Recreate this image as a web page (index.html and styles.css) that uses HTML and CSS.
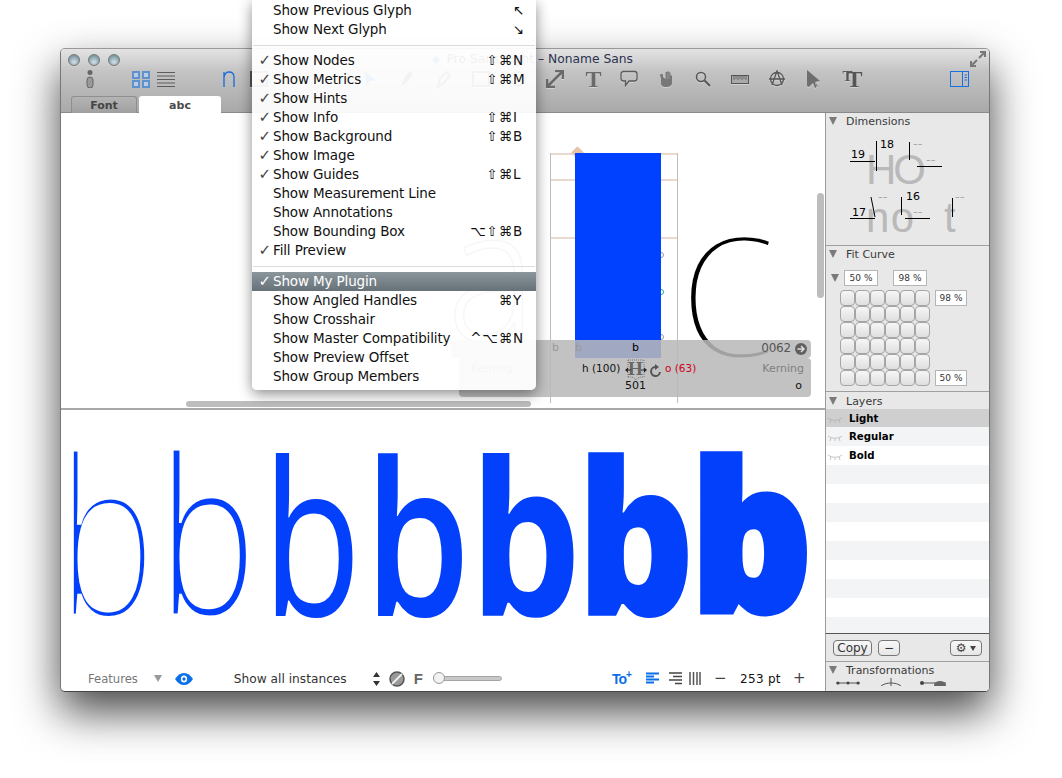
FILE: index.html

```html
<!DOCTYPE html>
<html lang="en">
<head>
    <meta charset="UTF-8">
    <title>Noname Sans</title>
    <link rel="stylesheet" href="styles.css">
</head>
<body>
<div class="window">
    <div class="titlebar">
        <div class="title-row">
            <div class="lights"><i></i><i></i><i></i></div>
            <div class="title"><span class="doc-dot"></span> Pro Sans Light – Noname Sans</div>
            <svg class="fullscreen" width="16" height="16" viewBox="0 0 16 16"><path d="M1 15 L7 9 M9 7 L15 1 M10 1 H15 V6 M1 10 V15 H6" fill="none" stroke="#777" stroke-width="2"/></svg>
        </div>
        <div class="tool-row">
            <svg class="info" width="8" height="18" viewBox="0 0 8 18"><circle cx="4" cy="2.5" r="2.5" fill="#666"/><rect x="1" y="7" width="6" height="11" rx="3" fill="#999" stroke="#666"/></svg>
            <svg class="view-grid" width="18" height="17" viewBox="0 0 18 17"><g fill="#b9cde6" stroke="#5f92cc" stroke-width="2"><rect x="1" y="1" width="6" height="6"/><rect x="11" y="1" width="6" height="6"/><rect x="1" y="10" width="6" height="6"/><rect x="11" y="10" width="6" height="6"/></g></svg>
            <svg class="view-list" width="18" height="17" viewBox="0 0 18 17"><path d="M0 1.5H18M0 5H18M0 8.500H18M0 12H18M0 15.500H18" stroke="#5c5c5c"/></svg>
            <svg class="tool-n" width="12" height="16" viewBox="0 0 12 16"><path d="M1 16V1M1 6C2 2 4 1 6 1C9 1 11 3 11 6V16" fill="none" stroke="#1f6fd8" stroke-width="1.400"/></svg>
            <div class="tools">
                <div class="tool"><svg width="18" height="16" viewBox="0 0 18 16"><rect x="1" y="1" width="16" height="14" fill="none" stroke="#555" stroke-width="2"/></svg></div>
                <div class="tool"></div>
                <div class="tool"></div>
                <div class="tool"><svg width="16" height="18" viewBox="0 0 16 18"><path d="M2 1L14 11H8L5 17Z" fill="#1f6fd8"/></svg></div>
                <div class="tool"><svg width="16" height="18" viewBox="0 0 16 18"><path d="M2 17L5 8L11 1L14 4L9 11Z" fill="#555"/></svg></div>
                <div class="tool"><svg width="16" height="18" viewBox="0 0 16 18"><path d="M2 17L4 9L10 2L14 6L8 13Z" fill="none" stroke="#555" stroke-width="2"/></svg></div>
                <div class="tool"><svg width="18" height="16" viewBox="0 0 18 16"><rect x="1" y="1" width="16" height="14" fill="none" stroke="#555" stroke-width="2"/></svg></div>
                <div class="tool"><svg width="18" height="18" viewBox="0 0 18 18"><circle cx="9" cy="9" r="7" fill="none" stroke="#555" stroke-width="2"/></svg></div>
                <div class="tool"><svg width="18" height="18" viewBox="0 0 18 18"><path d="M2 16L16 2M1 9V17H9M9 1H17V9" fill="none" stroke="#6a6a6a" stroke-width="2.600"/></svg></div>
                <div class="tool"><span class="tool-t">T</span></div>
                <div class="tool"><svg width="18" height="18" viewBox="0 0 18 18"><path d="M3.500 1.500H14.500C16 1.500 17 2.500 17 4V8.500C17 10 16 11 14.500 11H9L5.500 15.500V11H3.500C2 11 1 10 1 8.500V4C1 2.500 2 1.500 3.500 1.500Z" fill="none" stroke="#5a5a5a" stroke-width="1.300"/></svg></div>
                <div class="tool"><svg width="16" height="18" viewBox="0 0 16 18"><path d="M2 5L3 9V13C3 16 5 17 8 17C11 17 14 16 14 13V6C14 5 12.500 5 12.500 6V3C12.500 2 11 2 11 3V2C11 1 9.300 1 9.300 2V2.500C9.300 1.500 7.500 1.500 7.500 2.500V9L5 7V5C5 3.500 2 3.500 2 5Z" fill="#777"/><path d="M7.500 3V9M9.300 3V9M11 3V9" stroke="#a5a5a5" stroke-width="0.600"/></svg></div>
                <div class="tool"><svg width="16" height="16" viewBox="0 0 16 16"><circle cx="6" cy="6" r="4.500" fill="none" stroke="#555" stroke-width="1.500"/><path d="M9.500 9.500L15 15" stroke="#555" stroke-width="2"/></svg></div>
                <div class="tool"><svg width="18" height="9" viewBox="0 0 18 9"><rect x="0.500" y="0.500" width="17" height="8" fill="#aaa" stroke="#555"/><path d="M3 1V5M5 1V4M7 1V5M9 1V4M11 1V5M13 1V4M15 1V5" stroke="#555" stroke-width="0.700"/></svg></div>
                <div class="tool"><svg width="18" height="18" viewBox="0 0 18 18"><circle cx="9" cy="9" r="6.500" fill="none" stroke="#555" stroke-width="1.300"/><path d="M4 15L9 1L14 15M1 9H17" fill="none" stroke="#555" stroke-width="1.300"/></svg></div>
                <div class="tool"><svg width="15" height="19" viewBox="0 0 15 19"><path d="M1 0L14 11L9 12L12 16L9 18L7 13L3 17L1 16Z" fill="#6e6e6e"/><path d="M9 14H10M11 14H12M10 16H11" stroke="#ddd" stroke-width="0.800"/></svg></div>
                <div class="tool"><span class="tool-tt">T</span><span class="tool-tt big">T</span></div>
            </div>
            <svg class="panel-toggle" width="19" height="16" viewBox="0 0 19 16"><rect x="0.500" y="0.500" width="18" height="15" fill="none" stroke="#1a6fe0"/><path d="M12.500 1V15" stroke="#1a6fe0"/><path d="M14.500 4H17M14.500 6.500H17M14.500 9H17" stroke="#1a6fe0"/></svg>
        </div>
        <div class="tabs">
            <div class="tab">Font</div>
            <div class="tab active">abc</div>
        </div>
    </div>

    <div class="main">
        <div class="editor">
            <div class="canvas">
                <span class="ghost-a">a</span>
                <div class="metric-box">
                    <span class="metric-line l1"></span>
                    <span class="metric-line l2"></span>
                    <span class="metric-line l3"></span>
                </div>
                <span class="anchor"></span>
                <span class="node n1"></span>
                <span class="node n2"></span>
                <span class="node n3"></span>
                <span class="plugin-rect"></span>
                <span class="next-c">c</span>
                <div class="info-top">
                    <span class="info-prev">b</span>
                    <span class="info-prev second">b</span>
                    <span class="info-name">b</span>
                    <span class="info-code">0062</span>
                    <svg class="info-go" width="12" height="12" viewBox="0 0 12 12"><circle cx="6" cy="6" r="6" fill="#606060"/><path d="M2.500 6H8M6 3L9 6L6 9" fill="none" stroke="#ddd" stroke-width="1.500"/></svg>
                </div>
                <div class="info-bottom">
                    <span class="left-k">h (100)</span>
                    <span class="h-mark">H</span>
                    <svg class="h-arrows" width="22" height="22" viewBox="0 0 22 22"><path d="M1 11H6M16 11H21" stroke="#222"/><path d="M0 11L3 8.500V13.500ZM22 11L19 8.500V13.500Z" fill="#222"/><path d="M3 1H19M3 1V18M19 1V18M3 18C7 18 9 18 11 21C13 18 15 18 19 18" fill="none" stroke="#444" stroke-width="0.600" stroke-dasharray="1 1"/></svg>
                    <span class="width-val">501</span>
                    <svg class="reload" width="14" height="14" viewBox="0 0 14 14"><path d="M11 8A4.500 4.500 0 1 1 7 3" fill="none" stroke="#555" stroke-width="2"/><path d="M6 0L10 3L6 6Z" fill="#555"/></svg>
                    <span class="right-k">o (63)</span>
                    <span class="kern-label">Kerning</span>
                    <span class="kern-val">o</span>
                    <span class="kern-hidden">Kerning</span>
                </div>
                <span class="scroll-v"></span>
                <span class="scroll-h"></span>
            </div>
            <div class="preview">
                <div class="samples">
                    <span class="b b1">b</span>
                    <span class="b b2">b</span>
                    <span class="b b3">b</span>
                    <span class="b b4">b</span>
                    <span class="b b5">b</span>
                    <span class="b b6">b</span>
                    <span class="b b7">b</span>
                </div>
                <div class="status">
                    <span class="features">Features</span>
                    <span class="tri tri-features"></span>
                    <svg class="eye" width="18" height="12" viewBox="0 0 20 12" preserveAspectRatio="none"><path d="M0 6C3 2 6 0 10 0C14 0 17 2 20 6C17 10 14 12 10 12C6 12 3 10 0 6Z" fill="#0a6fe8"/><circle cx="10" cy="6" r="3.500" fill="#fff"/><circle cx="10" cy="6" r="1.800" fill="#0a6fe8"/></svg>
                    <span class="instances">Show all instances</span>
                    <svg class="stepper" width="7" height="14" viewBox="0 0 7 14"><path d="M3.500 0L7 5H0ZM3.500 14L0 9H7Z" fill="#333"/></svg>
                    <svg class="no-icon" width="16" height="16" viewBox="0 0 16 16"><circle cx="8" cy="8" r="7" fill="#999" stroke="#555" stroke-width="1.500"/><path d="M3 13L13 3" stroke="#eee" stroke-width="2"/></svg>
                    <span class="f-mark">F</span>
                    <div class="slider"><span class="knob"></span></div>
                    <span class="to-plus">To<sup>+</sup></span>
                    <svg class="align a-left" width="13" height="13" viewBox="0 0 13 13"><path d="M0 1.500H13M0 4.500H8M0 7.500H13M0 10.500H8" stroke="#0a6fe8" stroke-width="2"/></svg>
                    <svg class="align a-right" width="13" height="13" viewBox="0 0 13 13"><path d="M0 1H13M4 4.500H13M0 8H13M6 11.500H13" stroke="#444" stroke-width="1.500"/></svg>
                    <svg class="align a-just" width="12" height="13" viewBox="0 0 12 13"><path d="M1 0V13M4.500 0V13M8 0V13M11 0V13" stroke="#555" stroke-width="1.500"/></svg>
                    <span class="zoom-btn minus">−</span>
                    <span class="size">253 pt</span>
                    <span class="zoom-btn plus">+</span>
                </div>
            </div>
        </div>

        <div class="sidebar">
            <section class="panel dims">
                <h4><span class="tri"></span>Dimensions</h4>
                <svg class="dim-art" width="164" height="112" viewBox="826 132 164 112">
                    <text x="866" y="184" class="dim-big" textLength="60">HO</text>
                    <text x="866" y="232" class="dim-big" textLength="48">no</text>
                    <text x="944" y="232" class="dim-big">t</text>
                    <path d="M850 161.500H875M876.500 141V171M909.500 142V160M917 166.500H942M850 218.500H875M871 197L875 217M901.500 197V215M905 218.500H930M952.500 198V217" stroke="#000" fill="none"/>
                    <text x="851" y="158" class="dim-num">19</text>
                    <text x="880" y="148" class="dim-num">18</text>
                    <text x="852" y="216" class="dim-num">17</text>
                    <text x="906" y="200" class="dim-num">16</text>
                    <text x="913" y="148" class="dim-dash">--</text>
                    <text x="926" y="164" class="dim-dash">--</text>
                    <text x="878" y="201" class="dim-dash">--</text>
                    <text x="913" y="216" class="dim-dash">--</text>
                    <text x="955" y="201" class="dim-dash">--</text>
                </svg>
            </section>
            <section class="panel fit">
                <h4><span class="tri"></span>Fit Curve</h4>
                <div class="fit-top">
                    <span class="tri"></span>
                    <span class="pct">50 %</span>
                    <span class="pct">98 %</span>
                </div>
                <div class="fit-body">
                    <div class="fit-grid">
                        <i></i><i></i><i></i><i></i><i></i><i></i>
                        <i></i><i></i><i></i><i></i><i></i><i></i>
                        <i></i><i></i><i></i><i></i><i></i><i></i>
                        <i></i><i></i><i></i><i></i><i></i><i></i>
                        <i></i><i></i><i></i><i></i><i></i><i></i>
                        <i></i><i></i><i></i><i></i><i></i><i></i>
                    </div>
                    <div class="fit-side">
                        <span class="pct">98 %</span>
                        <span class="pct">50 %</span>
                    </div>
                </div>
            </section>
            <section class="panel layers">
                <h4><span class="tri"></span>Layers</h4>
                <ul class="layer-list">
                    <li class="selected"><svg width="14" height="6" viewBox="0 0 14 6"><path d="M0 1C4 4 10 4 14 1M3 3L2 6M7 4V6M11 3L12 6" fill="none" stroke="#aaa" stroke-width="0.700"/></svg>Light</li>
                    <li><svg width="14" height="6" viewBox="0 0 14 6"><path d="M0 1C4 4 10 4 14 1M3 3L2 6M7 4V6M11 3L12 6" fill="none" stroke="#aaa" stroke-width="0.700"/></svg>Regular</li>
                    <li><svg width="14" height="6" viewBox="0 0 14 6"><path d="M0 1C4 4 10 4 14 1M3 3L2 6M7 4V6M11 3L12 6" fill="none" stroke="#aaa" stroke-width="0.700"/></svg>Bold</li>
                    <li></li><li></li><li></li><li></li><li></li><li></li><li></li><li></li><li></li>
                </ul>
                <div class="layer-actions">
                    <button class="btn btn-copy">Copy</button>
                    <button class="btn btn-minus">−</button>
                    <button class="btn btn-gear">⚙ <span class="tri-small"></span></button>
                </div>
            </section>
            <section class="panel trans">
                <h4><span class="tri"></span>Transformations</h4>
                <svg class="trans-icons" width="130" height="8" viewBox="0 0 130 8"><path d="M10 5H34M65 0V8M55 8C60 4 70 4 75 8M95 5H120" stroke="#555" fill="none"/><circle cx="12" cy="5" r="1.500" fill="#444"/><circle cx="22" cy="5" r="1.500" fill="#444"/><circle cx="32" cy="5" r="1.500" fill="#444"/><circle cx="96" cy="5" r="2" fill="#444"/><ellipse cx="114" cy="7" rx="6" ry="4" fill="#666"/></svg>
            </section>
        </div>
    </div>
</div>

<div class="menu">
    <div class="item"><span></span><span>Show Previous Glyph</span><span></span><span class="key">↖</span></div>
    <div class="item"><span></span><span>Show Next Glyph</span><span></span><span class="key">↘</span></div>
    <hr>
    <div class="item"><span class="check">✓</span><span>Show Nodes</span><span class="mods">⇧⌘</span><span class="key">N</span></div>
    <div class="item"><span class="check">✓</span><span>Show Metrics</span><span class="mods">⇧⌘</span><span class="key">M</span></div>
    <div class="item"><span class="check">✓</span><span>Show Hints</span><span></span><span class="key"></span></div>
    <div class="item"><span class="check">✓</span><span>Show Info</span><span class="mods">⇧⌘</span><span class="key">I</span></div>
    <div class="item"><span class="check">✓</span><span>Show Background</span><span class="mods">⇧⌘</span><span class="key">B</span></div>
    <div class="item"><span class="check">✓</span><span>Show Image</span><span></span><span class="key"></span></div>
    <div class="item"><span class="check">✓</span><span>Show Guides</span><span class="mods">⇧⌘</span><span class="key">L</span></div>
    <div class="item"><span></span><span>Show Measurement Line</span><span></span><span class="key"></span></div>
    <div class="item"><span></span><span>Show Annotations</span><span></span><span class="key"></span></div>
    <div class="item"><span></span><span>Show Bounding Box</span><span class="mods">⌥⇧⌘</span><span class="key">B</span></div>
    <div class="item"><span class="check">✓</span><span>Fill Preview</span><span></span><span class="key"></span></div>
    <hr>
    <div class="item on"><span class="check">✓</span><span>Show My Plugin</span><span></span><span class="key"></span></div>
    <div class="item"><span></span><span>Show Angled Handles</span><span class="mods">⌘</span><span class="key">Y</span></div>
    <div class="item"><span></span><span>Show Crosshair</span><span></span><span class="key"></span></div>
    <div class="item"><span></span><span>Show Master Compatibility</span><span class="mods">^⌥⌘</span><span class="key">N</span></div>
    <div class="item"><span></span><span>Show Preview Offset</span><span></span><span class="key"></span></div>
    <div class="item"><span></span><span>Show Group Members</span><span></span><span class="key"></span></div>
</div>
</body>
</html>
```

FILE: styles.css

```css
* { box-sizing: border-box; }
html, body { margin: 0; height: 778px; overflow: hidden; background: #fff; }
body { font-family: "DejaVu Sans", sans-serif; color: #000; position: relative; }

.window { margin: 48px 0 0 60px; width: 930px; height: 644px; border: 1px solid #777; border-top-color: #999; border-bottom-color: #444; border-radius: 5px; background: #fff; box-shadow: 0 20px 44px rgba(0,0,0,.72); overflow: hidden; display: flex; flex-direction: column; }

/* title bar */
.titlebar { height: 64px; flex: none; background: linear-gradient(#e4e4e4, #c4c4c4 22px, #a9a9a9 63px, #8a8a8a 63px); display: flex; flex-direction: column; }
.title-row { height: 20px; display: flex; align-items: center; padding: 0 1px 0 7px; }
.lights { display: flex; gap: 8px; margin-top: 1px; }
.lights i { width: 12px; height: 12px; border-radius: 50%; border: 1px solid #777; background: radial-gradient(circle at 50% 70%, #d4e2e8, #7f9aa6 70%); }
.title { margin-left: 272px; width: 241px; font-size: 12.300px; color: #2c3350; text-align: right; white-space: nowrap; }
.doc-dot { display: inline-block; width: 6px; height: 6px; background: #3a78b8; transform: rotate(45deg); margin-right: 4px; }
.fullscreen { margin-left: auto; margin-right: 2px; }

.tool-row { height: 20px; display: flex; align-items: center; padding-left: 25px; }
.view-grid { margin-left: 38px; }
.view-list { margin-left: 7px; }
.tool-n { margin-left: 48px; margin-top: -1px; }
.tools { display: flex; margin-left: 5px; }
.tool { width: 37px; height: 20px; display: flex; align-items: center; justify-content: center; filter: drop-shadow(0 1px 0 rgba(255,255,255,.35)); }
.tool-t, .tool-tt { font-family: "Liberation Serif", serif; font-weight: bold; color: #6a6a6a; font-size: 24px; line-height: 1; }
.tool-t { padding-left: 4px; }
.tool-tt { font-size: 15px; color: #555; margin-left: 4px; margin-top: -6px; }
.tool-tt.big { font-size: 24px; margin: 0 0 0 -6px; }
.panel-toggle { margin-left: 81px; }

.tabs { display: flex; gap: 2px; padding-left: 10px; margin-top: auto; height: 17px; }
.tab { width: 66px; background: linear-gradient(#b4b4b4, #a0a0a0); border: 1px solid #8f8f8f; border-bottom: 0; border-radius: 3px 3px 0 0; font-size: 11px; font-weight: bold; color: #444; text-align: center; line-height: 16px; padding-top: 1px; }
.tab.active { width: 82px; background: #fff; border-color: #fff; color: #4a4a4a; }

.main { flex: 1; display: flex; min-height: 0; }
.editor { width: 764px; flex: none; display: flex; flex-direction: column; }

/* edit canvas: everything in here has a free position */
.canvas { height: 297px; flex: none; position: relative; overflow: hidden; border-bottom: 2px solid #a8a8a8; }
.ghost-a { position: absolute; left: 386px; top: 63px; font: 300 185px/1 "Open Sans", sans-serif; color: transparent; -webkit-text-stroke: 1.500px #888; transform: scaleX(.91); transform-origin: 0 0; }
.metric-box { position: absolute; left: 489px; top: 40px; width: 128px; height: 250px; border: 1px solid #bdbdbd; border-bottom: 0; }
.metric-line { position: absolute; left: 0; right: 0; height: 2px; background: #e9d9cf; }
.l1 { top: -1px; }
.l2 { top: 25px; }
.l3 { top: 83px; }
.anchor { position: absolute; left: 512px; top: 35px; width: 9px; height: 9px; background: #e6c4a8; transform: rotate(45deg); }
.plugin-rect { position: absolute; left: 514px; top: 40px; width: 86px; height: 205px; background: #0040ff; }
.node { position: absolute; width: 6px; height: 6px; border: 1px solid #999; border-radius: 50%; background: #fff; left: 597px; }
.n1 { top: 139px; }
.n2 { top: 176px; border-color: #2a9; left: 597px; }
.n3 { top: 221px; }
.next-c { position: absolute; left: 614px; top: 42px; font: 300 230px/1 "Open Sans", sans-serif; color: #000; -webkit-text-stroke: 7px #fff; transform: scaleX(.96); transform-origin: 0 0; }

.info-top, .info-bottom { position: absolute; right: 14px; background: rgba(185,185,185,.87); font-size: 11px; border-radius: 4px; }
.info-top { top: 227px; left: 390px; height: 18px; }
.info-bottom { top: 245px; left: 398px; height: 39px; }
.info-top span, .info-top svg, .info-bottom span, .info-bottom svg { position: absolute; white-space: nowrap; }
.info-prev { left: 101px; top: 1px; color: #999; }
.info-prev.second { left: 124px; }
.info-name { left: 181px; top: 1px; }
.info-code { right: 20px; top: 1px; color: #555; font-size: 12px; letter-spacing: -.2px; }
.info-go { right: 4px; top: 3px; }
.left-k { left: 123px; top: 4px; color: #111; font-size: 10.500px; }
.h-mark { left: 169px; top: 0; font: bold 19px/22px "Liberation Serif", serif; color: #666; }
.h-arrows { left: 166px; top: 1px; }
.width-val { left: 166px; top: 21px; color: #111; }
.reload { left: 190px; top: 6px; }
.right-k { left: 206px; top: 4px; color: #d0021b; font-size: 10.500px; }
.kern-label { right: 7px; top: 4px; color: #808080; }
.kern-val { right: 9px; top: 21px; color: #111; }
.kern-hidden { left: 12px; top: 4px; color: #777; }

.scroll-v { position: absolute; left: 756px; top: 80px; width: 7px; height: 105px; border-radius: 4px; background: #bdbdbd; }
.scroll-h { position: absolute; left: 125px; top: 288px; width: 345px; height: 6px; border-radius: 3px; background: #bdbdbd; }

/* sample line */
.preview { flex: 1; display: flex; flex-direction: column; min-height: 0; }
.samples { height: 256px; display: flex; overflow: hidden; }
.b { font-family: "Open Sans", sans-serif; font-size: 214px; line-height: 1; color: #0340fb; display: block; flex: none; transform-origin: 0 0; margin-top: 16px; }
.b1 { font-weight: 300; font-size: 222px; width: 101px; margin-left: -4px; margin-top: 10px; transform: scaleX(.75); -webkit-text-stroke: 6px #fff; }
.b2 { font-weight: 300; font-size: 218px; width: 104px; margin-top: 12px; transform: scaleX(.76); -webkit-text-stroke: 3px #fff; }
.b3 { font-weight: 400; width: 102px; transform: scaleX(.76); }
.b4 { font-weight: 600; width: 105px; transform: scaleX(.8); }
.b5 { font-weight: 700; width: 107px; transform: scaleX(.83); }
.b6 { font-weight: 800; width: 115px; transform: scaleX(.87); }
.b7 { font-weight: 800; font-size: 205px; width: 120px; margin-top: 19px; transform: scaleX(.917); -webkit-text-stroke: 6.900px #0340fb; }

.status { flex: 1; display: flex; align-items: center; padding-left: 27px; font-size: 12.200px; color: #333; }
.features { color: #777; font-size: 11.600px; }
.tri { display: inline-block; width: 0; height: 0; border-left: 4.500px solid transparent; border-right: 4.500px solid transparent; border-top: 8px solid #7a7a7a; }
.tri-features { margin-left: 16px; border-left-width: 4px; border-right-width: 4px; border-top-width: 7px; border-top-color: #999; }
.eye { margin-left: 13px; }
.instances { margin-left: 41px; width: 120px; }
.stepper { margin-left: 19px; }
.no-icon { margin-left: 9px; }
.f-mark { margin-left: 9px; font: bold 15px/1 "Liberation Sans", sans-serif; color: #666; }
.slider { margin-left: 10px; width: 69px; height: 5px; border: 1px solid #a5a5a5; border-radius: 3px; background: #c8c8c8; position: relative; }
.knob { position: absolute; left: -1px; top: -5px; width: 12px; height: 12px; border-radius: 50%; border: 1px solid #999; background: #f2f2f2; }
.to-plus { margin-left: 110px; color: #0a6fe8; font: bold 14px/1 "Liberation Sans", sans-serif; width: 20px; white-space: nowrap; letter-spacing: -1px; }
.to-plus sup { font-size: 10px; line-height: 0; }
.a-left { margin-left: 14px; }
.a-right { margin-left: 10px; }
.a-just { margin-left: 7px; }
.zoom-btn { font-size: 15px; color: #444; width: 12px; text-align: center; line-height: 1; }
.minus { margin-left: 13px; }
.size { margin-left: 14px; width: 53px; color: #111; font-size: 12px; letter-spacing: .3px; }

/* inspector */
.sidebar { flex: 1; background: #e8e8e8; border-left: 1px solid #9a9a9a; display: flex; flex-direction: column; font-size: 11px; color: #333; }
.panel h4 { margin: 0; font-size: 11px; font-weight: normal; height: 16px; display: flex; align-items: center; gap: 9px; padding-left: 3px; color: #3a3a3a; }
.panel { border-bottom: 1px solid #a0a0a0; }
.dims { height: 133px; }
.dim-art { display: block; margin-top: 3px; }
.dim-big { font: 42px "Liberation Sans", sans-serif; fill: #b9b9b9; }
.dim-num { font: 11px "DejaVu Sans", sans-serif; fill: #000; }
.dim-dash { font: 13px "DejaVu Sans", sans-serif; fill: #aaa; }

.fit { height: 146px; }
.fit-top { display: flex; align-items: center; margin-top: 8px; padding-left: 5px; height: 16px; }
.fit-top .tri { margin-right: 5px; }
.fit-top .pct:last-child { margin-left: 15px; }
.pct { display: block; width: 34px; height: 16px; background: #fff; border: 1px solid #b5b5b5; font-size: 9px; line-height: 14px; text-align: center; color: #333; }
.fit-body { display: flex; margin-top: 4px; padding-left: 14px; }
.fit-grid { display: grid; grid-template-columns: repeat(6, 15px); grid-auto-rows: 16px; }
.fit-grid i { width: 15px; height: 16px; border: 1px solid #a5a5a5; border-radius: 4px; background: linear-gradient(#f6f6f6, #dfdfdf); }
.fit-side { margin-left: 5px; display: flex; flex-direction: column; justify-content: space-between; }
.fit-side .pct { width: 32px; }

.layers { height: 270px; display: flex; flex-direction: column; }
.layers h4 { height: 17px; padding-top: 1px; }
.layer-list { list-style: none; margin: 0; padding: 0; height: 225px; overflow: hidden; background: #fff; border-bottom: 1px solid #555; }
.layer-list li { height: 19px; display: flex; align-items: center; font-size: 10.200px; font-weight: bold; color: #000; gap: 7px; padding-left: 2px; }
.layer-list li svg { margin-top: 3px; }
.layer-list li:nth-child(even) { background: #f3f4f6; }
.layer-list li.selected { background: #cfcfcf; height: 18px; }
.layer-actions { display: flex; align-items: center; padding: 0 8px 0 7px; flex: 1; gap: 6px; }
.btn { height: 16px; border: 1px solid #777; border-radius: 4px; background: linear-gradient(#f8f8f8, #e6e6e6); font: 12px/1 "DejaVu Sans", sans-serif; color: #333; padding: 0; }
.btn-copy { width: 39px; }
.btn-minus { width: 22px; }
.btn-gear { width: 32px; margin-left: auto; font-size: 12px; color: #444; }
.tri-small { display: inline-block; border-left: 3.500px solid transparent; border-right: 3.500px solid transparent; border-top: 5px solid #444; vertical-align: 1px; }
.trans { flex: 1; border-bottom: 0; min-height: 0; overflow: hidden; }
.trans-icons { display: block; }

/* view menu, drops over the window */
.menu { position: absolute; left: 252px; top: 0; width: 284px; height: 390px; padding-top: 1px; background: rgba(255,255,255,.93); border-radius: 0 0 5px 5px; box-shadow: 0 4px 14px rgba(0,0,0,.45); font-size: 13.500px; letter-spacing: -.14px; color: #111; }
.menu hr { margin: 6px 1px 5px; border: 0; border-top: 1px solid #dcdcdc; height: 0; }
.item { height: 19px; line-height: 19px; display: grid; grid-template-columns: 21px 1fr auto 23px; white-space: nowrap; }
.check { text-align: right; padding-right: 2px; color: #444; font-size: 15px; }
.mods { letter-spacing: .8px; }
.key { font-size: 13.500px; }
.item.on { background: linear-gradient(#8b969c, #677278); color: #fff; }
.item.on .check { color: #fff; }
```
